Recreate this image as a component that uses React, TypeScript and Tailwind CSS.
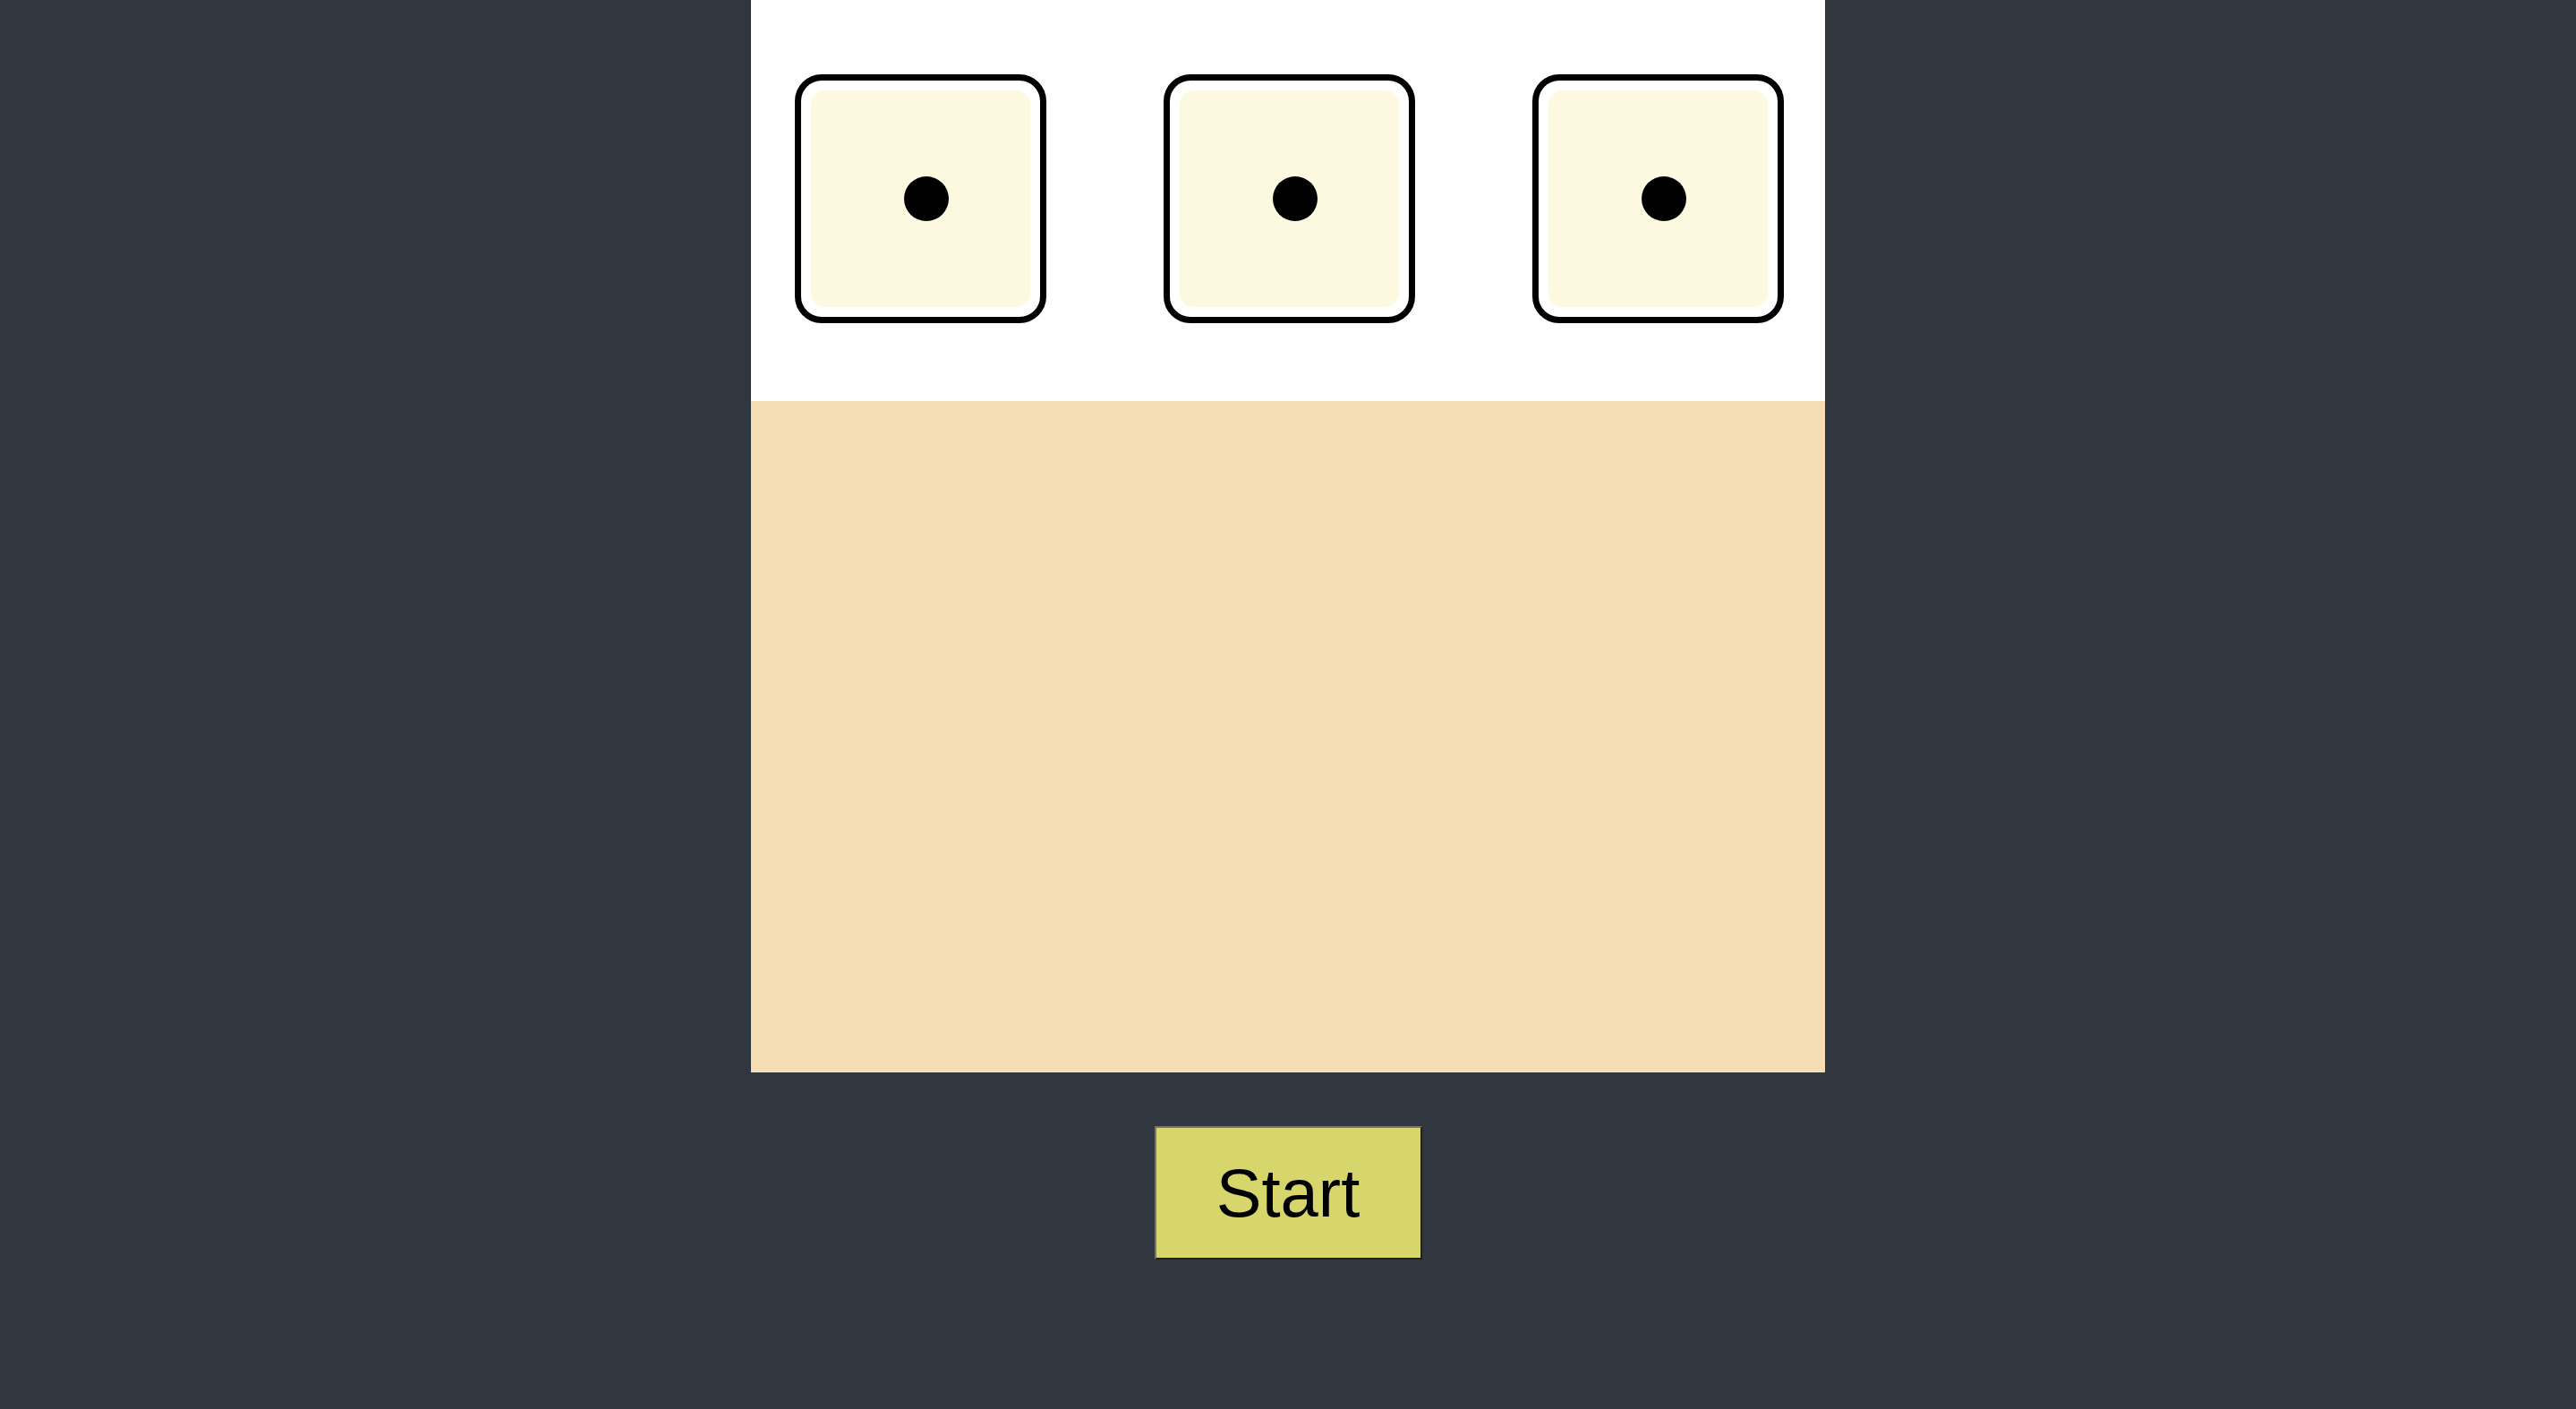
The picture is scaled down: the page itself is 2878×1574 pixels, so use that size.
import React from "react";

function Die() {
  return (
    <div className="w-[281px] h-[278px] rounded-[30px] border-[7px] border-black bg-white p-[11px] box-border">
      <div className="w-full h-full rounded-[16px] bg-[#fdf8e0] flex items-center justify-center">
        <div className="w-[50px] h-[50px] rounded-full bg-black ml-[13px]" />
      </div>
    </div>
  );
}

export default function App() {
  return (
    <div className="min-h-screen w-full bg-[#30373f] flex flex-col items-center">
      <div className="w-[1200px] flex flex-col">
        <div className="h-[448px] bg-white flex items-start justify-between pt-[83px] pl-[49px] pr-[46px]">
          <Die />
          <Die />
          <Die />
        </div>
        <div className="h-[750px] bg-[#f5deb3]" />
      </div>
      <button
        className="mt-[60px] w-[299px] h-[149px] bg-[#d7d66d] border-2 border-t-[#767676] border-l-[#767676] border-r-[#202020] border-b-[#202020] text-black text-[76px] leading-none flex items-center justify-center"
        style={{ fontFamily: '"Liberation Sans", Arial, sans-serif' }}
      >
        Start
      </button>
    </div>
  );
}
